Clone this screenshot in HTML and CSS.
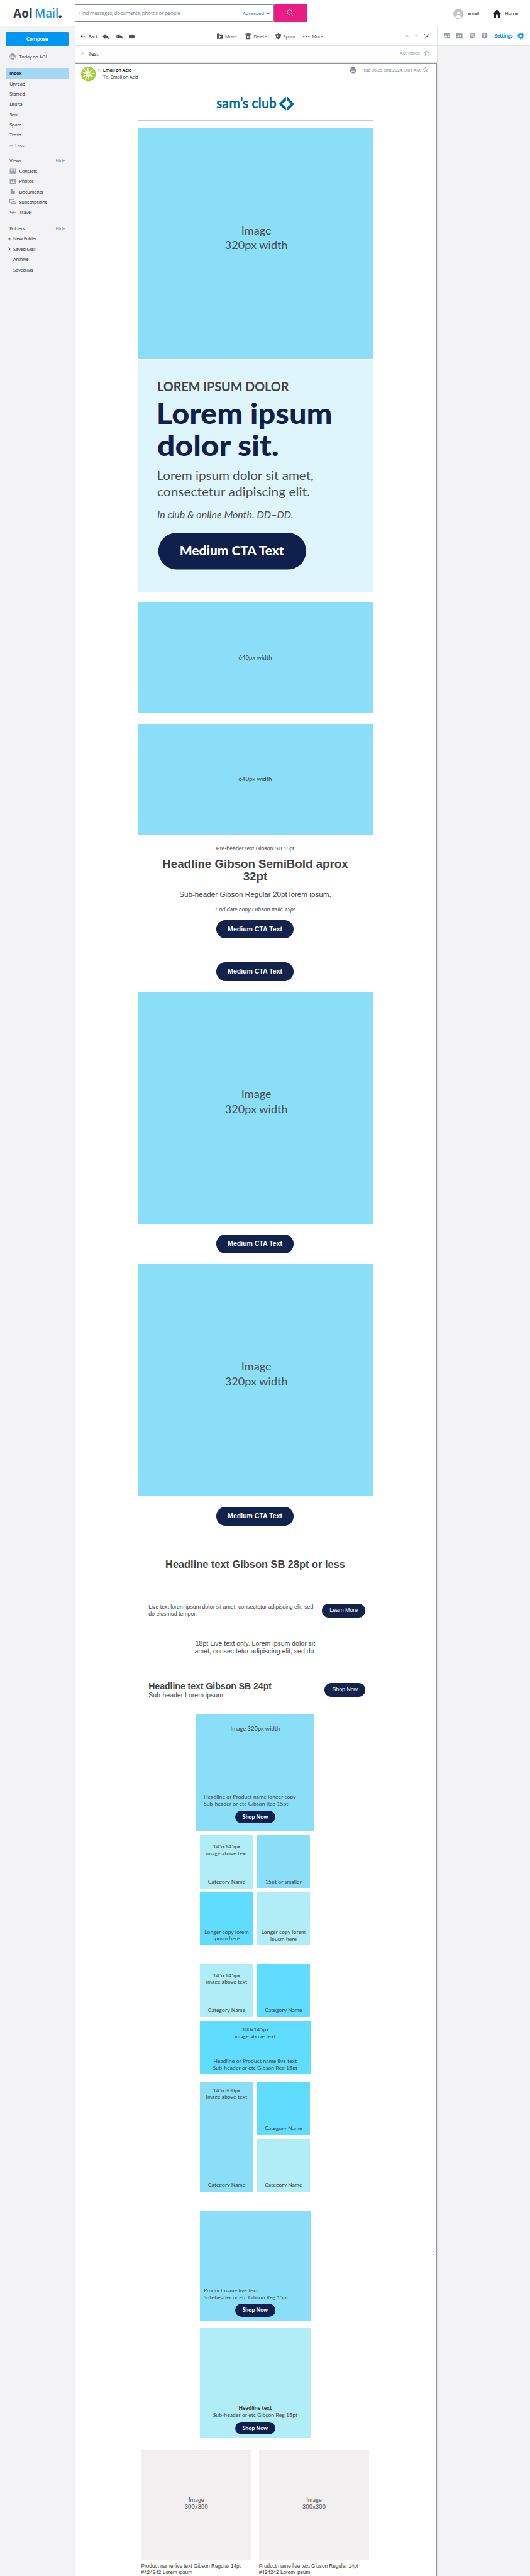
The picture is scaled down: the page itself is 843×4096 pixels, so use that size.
FILE: index.html
```html
<!DOCTYPE html>
<html lang="en">
<head>
<meta charset="utf-8">
<title>Aol Mail - Test</title>
<link rel="stylesheet" href="styles.css">
</head>
<body>
<div class="page">
  <header class="top">
    <svg class="brand" viewBox="0 0 202 72">
      <text x="36" y="48.500" textLength="52" lengthAdjust="spacingAndGlyphs">Aol</text>
      <text class="brand-mail" x="94" y="48.500" textLength="65" lengthAdjust="spacingAndGlyphs">Mail</text>
      <circle cx="163.500" cy="45" r="3.600"/>
    </svg>
    <div class="search">
      <span class="search-hint">Find messages, documents, photos or people</span>
      <span class="search-adv">Advanced</span>
      <svg class="chev" viewBox="0 0 12 8"><path d="M1.5 1.5 6 6 10.500 1.500" fill="none" stroke="#0f69ff" stroke-width="2"/></svg>
    </div>
    <div class="search-btn"><svg viewBox="0 0 20 20"><circle cx="8" cy="7.500" r="6.300"/><path d="M12.300 12.300 19 19"/></svg></div>
    <div class="account">
      <svg class="face" viewBox="0 0 28 28"><circle cx="14" cy="14" r="14" fill="#c5c5c5"/><circle cx="14" cy="11.500" r="3.800" fill="#fff"/><path d="M5.500 23c1-4.500 4.500-6 8.500-6s7.500 1.500 8.500 6c-4.500 4-12.500 4-17 0z" fill="#fff"/></svg>
      <span class="who">email</span>
      <svg class="house" viewBox="0 0 22 23"><path d="M11 0 22 12H20V23H13.500V16.500a2.500 2.500 0 0 0-5 0V23H2V12H0z" fill="#1d2228"/></svg>
      <span>Home</span>
    </div>
  </header>

  <div class="body">
    <aside class="side">
      <div class="compose">Compose</div>
      <div class="today"><span class="today-ico">Aol.</span>Today on AOL</div>
      <ul class="nav">
        <li class="on">Inbox</li><li>Unread</li><li>Starred</li><li>Drafts</li><li>Sent</li><li>Spam</li><li>Trash</li>
        <li class="less"><svg viewBox="0 0 9 6"><path d="M1 5 4.500 1.500 8 5" fill="none" stroke="#5b636a" stroke-width="1.700"/></svg>Less</li>
      </ul>
      <div class="group"><span>Views</span><span class="hide">Hide</span></div>
      <ul class="views">
        <li><svg viewBox="0 0 18 16"><path fill="#979ea8" d="M1 1h16v14H1z"/><circle cx="6.500" cy="6" r="2" fill="#f4f4f7"/><path fill="#f4f4f7" d="M3 12c0-3 7-3 7 0zM11.500 4h4v1.300h-4zM11.500 7h4v1.300h-4zM12.500 10h3v1.300h-3z"/></svg>Contacts</li>
        <li><svg viewBox="0 0 18 16"><path fill="#979ea8" d="M1 1h16v14H1z"/><path fill="#f4f4f7" d="M3 12 6 6.500 8 9.500 11 5l4.500 7z"/></svg>Photos</li>
        <li><svg viewBox="0 0 18 16"><path fill="#979ea8" d="M3 1h7l5 5v9H3z"/><path fill="#f4f4f7" d="M10 1v5h5z"/></svg>Documents</li>
        <li><svg viewBox="0 0 18 16"><path fill="#979ea8" d="M0 1h13v2H2v8H0zM4 5h15v1l-7.500 4L4 6zM4 8l7.500 3.700L19 8v7H4z"/></svg>Subscriptions</li>
        <li><svg viewBox="0 0 18 16"><path fill="#979ea8" d="M1 5h2l2 2h4L6 3h2.500L13 7h3c2 0 2 2 0 2h-3l-4.500 4H6l2-3.700H4C2 9 1 7 1 5z"/></svg>Travel</li>
      </ul>
      <div class="group folders"><span>Folders</span><span class="hide">Hide</span></div>
      <ul class="dirs">
        <li><svg viewBox="0 0 10 10"><path d="M5 .5v9M.5 5h9" stroke="#5b636a" stroke-width="1.500"/></svg>New Folder</li>
        <li><svg viewBox="0 0 10 10"><path d="M3 1l4 4-4 4" fill="none" stroke="#5b636a" stroke-width="1.700"/></svg>Saved Mail</li>
        <li><i></i>Archive</li>
        <li><i></i>SavedIMs</li>
      </ul>
    </aside>

    <main class="main">
      <div class="bar">
        <div class="bar-left">
          <svg class="i-back" viewBox="0 0 14 14"><path d="M13.500 7H1.500M7 1.500 1.500 7 7 12.500" fill="none" stroke="#000" stroke-width="1.800"/></svg>
          <span class="t-back">Back</span>
          <svg class="i-reply" viewBox="0 0 18 15"><path d="M7.500 0v4c6 .5 9.500 4.500 10 11-2.500-4-5.500-5-10-5v4L0 7z"/></svg>
          <svg class="i-all" viewBox="0 0 20 15"><path d="M10 0v4c6 .5 9.500 4.500 10 11-2.500-4-5.500-5-10-5v4L3.500 7zM7 0v2L2.500 7 7 12v2L0 7z"/></svg>
          <svg class="i-fwd" viewBox="0 0 18 14"><path d="M10 0 18 7l-8 7v-3H0V3h10z"/></svg>
        </div>
        <div class="bar-mid">
          <svg viewBox="0 0 16 16"><path d="M0 1h6l2 2h8v12H0z"/><path d="M8 5.500 12 10H9v3.500H7V10H4z" fill="#fff"/></svg><span class="t-move">Move</span>
          <svg viewBox="0 0 16 16"><path d="M5 0h6v1h4.500v2H.5V1H5zM2 4.500h12V16H2z"/><path d="M6 7v6.500M10 7v6.500" stroke="#fff" stroke-width="1.500"/></svg><span class="t-del">Delete</span>
          <svg viewBox="0 0 16 17"><path d="M8 0c2.500 2 5 2.500 8 2.500 0 7-2 12-8 14.500C2 14.500 0 9.500 0 2.500 3 2.500 5.500 2 8 0z"/><path d="m5.500 5.500 5 5.500m0-5.500-5 5.500" stroke="#fff" stroke-width="1.800"/></svg><span class="t-spam">Spam</span>
          <svg class="dots" viewBox="0 0 18 4"><circle cx="2" cy="2" r="2"/><circle cx="9" cy="2" r="2"/><circle cx="16" cy="2" r="2"/></svg><span>More</span>
        </div>
        <div class="bar-right">
          <svg class="tri" viewBox="0 0 11 6"><path d="M0 6h11L5.500 0z"/></svg>
          <svg class="tri" viewBox="0 0 11 6"><path d="M0 0h11L5.500 6z"/></svg>
          <svg class="x" viewBox="0 0 13 13"><path d="m.5.5 12 12m0-12-12 12" stroke="#000" stroke-width="1.500"/></svg>
        </div>
      </div>
      <div class="subject">
        <span class="dot"></span><span class="title">Test</span>
        <span class="where">Aol/Inbox</span>
        <svg class="star" viewBox="0 0 16 16"><path d="m8 1.500 2 4.600 4.800.4-3.700 3.200 1.200 4.800L8 11.900l-4.300 2.600 1.200-4.800L1.200 6.500 6 6.100z"/></svg>
      </div>

      <article class="message">
        <div class="from">
          <svg class="avatar" viewBox="0 0 40 40"><circle cx="20" cy="20" r="20" fill="#a3cf34"/><path d="M20 20 18 4M20 20 29 9M20 20l16-2M20 20l12 8M20 20l1 15M20 20l-9 14M20 20 6 27M20 20 6 16M20 20 9 8" stroke="#fff" stroke-linecap="round" stroke-width="2.400"/><circle cx="20" cy="20" r="7" fill="#fff"/><path d="m15 22 4-4 5 1 1-3-2 7z" fill="none" stroke="#a3cf34"/></svg>
          <span class="dot"></span>
          <div class="names"><b>Email on Acid</b><div><em>To:</em> Email on Acid</div></div>
          <svg class="printer" viewBox="0 0 16 16"><path d="M3 0h10v4H3zM0 5.500h16V13h-2.500V10h-11v3H0zM4 11.500h8V16H4z"/></svg>
          <span class="date">Tue 06 25 amt 2024, 3:01 AM</span>
          <svg class="star" viewBox="0 0 16 16"><path d="m8 1.500 2 4.600 4.800.4-3.700 3.200 1.200 4.800L8 11.900l-4.300 2.600 1.200-4.800L1.200 6.500 6 6.100z"/></svg>
        </div>
        <svg class="handle" viewBox="0 0 8 12"><path d="M2 1.500 6 6l-4 4.500" fill="none" stroke="#979ea8" stroke-width="1.500"/></svg>

        <div class="mail">
          <svg class="logo" viewBox="0 0 212 35">
            <text x="0" y="29" textLength="164" lengthAdjust="spacingAndGlyphs">sam’s club</text>
            <path d="M189.500 0v8l-11 9.500 11 9.500v8l-2.500-.5-17-17L187 .5z"/><path d="M192.500 0v8l11 9.500-11 9.500v8l2.500-.5 17-17L195 .5z"/>
          </svg>
          <hr class="rule">
          <div class="pic first">Image<br>320px width</div>
          <svg class="hero" viewBox="0 0 640 629.600">
            <text class="hero-eyebrow" x="53" y="86" textLength="358" lengthAdjust="spacingAndGlyphs">LOREM IPSUM DOLOR</text>
            <text class="hero-title" x="51" y="174" textLength="478" lengthAdjust="spacingAndGlyphs">Lorem ipsum</text>
            <text class="hero-title" x="53" y="262" textLength="331" lengthAdjust="spacingAndGlyphs">dolor sit.</text>
            <text class="hero-text" x="52" y="326" textLength="426" lengthAdjust="spacingAndGlyphs">Lorem ipsum dolor sit amet,</text>
            <text class="hero-text" x="53" y="370" textLength="415" lengthAdjust="spacingAndGlyphs">consectetur adipiscing elit.</text>
            <text class="hero-date" x="53" y="430" textLength="370" lengthAdjust="spacingAndGlyphs">In club &amp; online Month. DD–DD.</text>
            <rect x="56" y="470" width="402" height="100" rx="50" fill="#10204c"/>
            <text class="hero-btn" x="114" y="532" textLength="284" lengthAdjust="spacingAndGlyphs">Medium CTA Text</text>
          </svg>
          <div class="half">640px width</div>
          <div class="half">640px width</div>

          <div class="pre">Pre-header text Gibson SB 15pt</div>
          <h1>Headline Gibson SemiBold aprox<br>32pt</h1>
          <div class="sub">Sub-header Gibson Regular 20pt lorem ipsum.</div>
          <div class="end">End date copy GIbson Italic 15pt</div>
          <div class="cta">Medium CTA Text</div>
          <div class="cta alone">Medium CTA Text</div>
          <div class="pic">Image<br>320px width</div>
          <div class="cta after">Medium CTA Text</div>
          <div class="pic">Image<br>320px width</div>
          <div class="cta after">Medium CTA Text</div>

          <h2>Headline text Gibson SB 28pt or less</h2>
          <div class="row live">
            <p>Live text lorem ipsum dolor sit amet, consectetur adipiscing elit, sed<br>do eiusmod tempor.</p>
            <div class="mini learn">Learn More</div>
          </div>
          <p class="only">18pt Live text only. Lorem ipsum dolor sit<br>amet, consec tetur adipiscing elit, sed do.</p>
          <div class="row shop">
            <div><h3>Headline text Gibson SB 24pt</h3><p>Sub-header Lorem ipsum</p></div>
            <div class="mini">Shop Now</div>
          </div>

          <div class="card">
            <div class="card-top">Image 320px width</div>
            <div class="card-copy">Headline or Product name longer copy<br>Sub-header or etc Gibson Reg 15pt</div>
            <div class="pill">Shop Now</div>
          </div>

          <div class="tiles">
            <div class="tile pale tall1"><span>145x145px<br>image above text</span><span>Category Name</span></div>
            <div class="tile blue"><span>15pt or smaller</span></div>
            <div class="tile cyan"><span>Longer copy lorem<br>ipusm here</span></div>
            <div class="tile pale low"><span>Longer copy lorem<br>ipusm here</span></div>
          </div>
          <div class="tiles second">
            <div class="tile pale tall1"><span>145x145px<br>image above text</span><span>Category Name</span></div>
            <div class="tile cyan"><span>Category Name</span></div>
            <div class="tile cyan wide"><span>300x145px<br>image above text</span><span>Headline or Product name live text<br>Sub-header or etc Gibson Reg 15pt</span></div>
          </div>
          <div class="tiles third">
            <div class="tile blue long"><span>145x300px<br>image above text</span><span>Category Name</span></div>
            <div class="tile cyan"><span>Category Name</span></div>
            <div class="tile pale"><span>Category Name</span></div>
          </div>

          <div class="promo blue">
            <div class="promo-copy left">Product name live text<br>Sub-header or etc Gibson Reg 15pt</div>
            <div class="pill">Shop Now</div>
          </div>
          <div class="promo pale next">
            <div class="promo-copy"><b>Headline text</b><br>Sub-header or etc Gibson Reg 15pt</div>
            <div class="pill">Shop Now</div>
          </div>

          <div class="products">
            <div><div class="thumb">Image<br>300x300</div><p>Product name live text Gibson Regular 14pt<br>#424242 Lorem ipsum</p></div>
            <div><div class="thumb">Image<br>300x300</div><p>Product name live text Gibson Regular 14pt<br>#424242 Lorem ipsum</p></div>
          </div>
        </div>
      </article>
    </main>

    <aside class="tools">
      <div class="tools-bar">
        <svg class="g1" viewBox="0 0 16 14"><path fill="#979ea8" d="M0 0h16v14H0z"/><circle cx="5.500" cy="5" r="2" fill="#fff"/><path fill="#fff" d="M2 11c0-3 7-3 7 0zM10.500 3h4v1.300h-4zM10.500 6h4v1.300h-4zM11.500 9h3v1.300h-3z"/></svg>
        <svg class="g2" viewBox="0 0 18 16"><path fill="#979ea8" d="M0 2h3V0h2v2h8V0h2v2h3v14H0z"/><text x="9" y="12.600" text-anchor="middle" class="cal">24</text></svg>
        <svg class="g3" viewBox="0 0 15 16"><path fill="#979ea8" d="M0 0h14v10H9v6H0zM10.500 11.500H14L10.500 16z"/><path stroke="#fff" stroke-width="1.300" d="M2.500 4h9M2.500 7h9M2.500 10h5"/></svg>
        <svg class="g4" viewBox="0 0 16 16"><circle cx="8" cy="8" r="8" fill="#979ea8"/><text x="8" y="12.300" text-anchor="middle" class="q">?</text></svg>
        <b>Settings</b>
        <svg class="g5" viewBox="0 0 18 18"><circle cx="9" cy="9" r="5" fill="none" stroke="#0f94f3" stroke-width="3.600"/><path d="M9 0v4M9 14v4M0 9h4M14 9h4M2.600 2.600l2.900 2.900M12.500 12.500l2.900 2.900M2.600 15.400l2.900-2.900M12.500 5.500l2.900-2.900" stroke="#0f94f3" stroke-width="3.200"/></svg>
      </div>
    </aside>
  </div>
</div>
</body>
</html>
```
FILE: styles.css
```css
/* 1rem = 10 layout units */
html { font-size: 5.852px; }
* { box-sizing: border-box; }
body { margin: 0; background: #fff; }
ul { list-style: none; margin: 0; padding: 0; }
p, h1, h2, h3 { margin: 0; }
svg { display: block; flex: none; overflow: visible; }

.page { width: 100%; height: 100vh; overflow: hidden; font: 1.26rem/2.8rem "Open Sans", "Noto Sans", sans-serif; letter-spacing: -.02em; color: #232a31; display: flex; flex-direction: column; white-space: nowrap; }

/* header */
.top { height: 7.2rem; flex: none; border-bottom: 1px solid #e0e4e9; display: flex; }
.brand { width: 20.25rem; height: 7.2rem; font: 700 33px "Open Sans", sans-serif; letter-spacing: 0; fill: #3c3c3c; }
.brand-mail { fill: #2a8fe2; font-weight: 600; }
.search { width: 54.2rem; height: 4.8rem; margin-top: 1.2rem; border: 1px solid #828a93; border-radius: .2rem 0 0 .2rem; display: flex; align-items: center; padding-left: 1.1rem; }
.search-hint { font-size: 1.4rem; color: #828a93; width: 44.4rem; letter-spacing: -.035em; }
.search-adv { font-size: 1.35rem; color: #0f69ff; width: 6.3rem; letter-spacing: -.03em; }
.chev { width: 1.2rem; height: .8rem; }
.search-btn { width: 9.1rem; height: 4.8rem; margin-top: 1.2rem; background: #e81c82; border-radius: .2rem; display: flex; align-items: center; justify-content: center; }
.search-btn svg { width: 2rem; height: 2rem; fill: none; stroke: #fff; stroke-width: 1.5; }
.account { margin-left: 39.7rem; height: 7.2rem; display: flex; align-items: center; font-size: 1.35rem; font-weight: 500; letter-spacing: -.04em; color: #1d2228; }
.face { width: 2.8rem; height: 2.8rem; margin-top: .4rem; }
.who { margin-left: 1rem; width: 7rem; }
.house { width: 2.2rem; height: 2.3rem; margin-top: .3rem; margin-right: 1rem; }

.body { flex: 1; display: flex; min-height: 0; }

/* sidebar */
.side { width: 20.3rem; flex: none; background: #f3f3f6; padding: 1.6rem 1.75rem 0 1.6rem; }
.compose { height: 3.6rem; border-radius: .2rem; background: #0096f2; color: #fff; font: 700 1.4rem/3.6rem "Open Sans", sans-serif; letter-spacing: -.05em; text-align: center; }
.today { height: 5.3rem; padding: 1.6rem 0 0 .9rem; border-bottom: 1px solid #d5d8dd; display: flex; }
.today-ico { width: 1.8rem; height: 1.8rem; margin: .5rem .9rem 0 0; border-radius: 50%; background: #979ea8; color: #fff; font: 700 .85rem/1.8rem "Open Sans", sans-serif; text-align: center; }
.nav { padding-top: .8rem; }
.nav li { height: 2.8rem; padding-left: 1rem; }
.nav .on { background: #a5d6f6; border-left: .25rem solid #0f8fe8; padding-left: .8rem; font-weight: 700; letter-spacing: -.04em; }
.nav .less { display: flex; align-items: center; gap: .6rem; color: #5b636a; }
.less svg { width: .9rem; height: .6rem; }
.group { display: flex; justify-content: space-between; padding: 0 .8rem 0 1rem; margin-top: 1.4rem; }
.folders { margin-top: 1.6rem; }
.hide { color: #6e7780; }
.views li { height: 2.8rem; display: flex; align-items: center; padding-left: .9rem; gap: .9rem; }
.views svg { width: 1.8rem; height: 1.6rem; }
.dirs li { height: 2.8rem; display: flex; align-items: center; padding-left: .5rem; gap: .5rem; }
.dirs svg, .dirs i { width: 1rem; height: 1rem; }

/* reading pane */
.main { width: 98.4rem; flex: none; display: flex; flex-direction: column; }
.bar { height: 5.2rem; flex: none; border-bottom: 1px solid #e0e4e9; display: flex; align-items: center; color: #4d5359; }
.bar svg { fill: #4d4f52; }
.bar-left { width: 38.7rem; padding-left: 1.6rem; padding-top: .4rem; display: flex; align-items: center; color: #232a31; }
.i-back { width: 1.3rem; height: 1.3rem; }
.t-back { width: 4.7rem; padding-left: .8rem; }
.i-reply { width: 1.8rem; height: 1.5rem; }
.i-all { width: 2rem; height: 1.5rem; margin-left: 1.7rem; }
.i-fwd { width: 1.8rem; height: 1.4rem; margin-left: 1.7rem; }
.bar-mid { width: 51.1rem; padding-top: .4rem; display: flex; align-items: center; }
.bar-mid svg { width: 1.6rem; height: 1.6rem; margin-right: .6rem; }
.t-move { width: 5.5rem; }
.t-del { width: 5.9rem; }
.t-spam { width: 5.4rem; }
.bar-mid .dots { width: 1.8rem; height: .4rem; margin-right: .6rem; }
.bar-right { display: flex; align-items: center; gap: 1.35rem; }
.bar-right .tri { width: 1.1rem; height: .6rem; fill: #b9bdc2; margin-bottom: .2rem; }
.bar-right .x { width: 1.3rem; height: 1.3rem; margin: .4rem 0 0 .4rem; }
.subject { height: 4.7rem; flex: none; display: flex; align-items: center; padding-left: 1.8rem; }
.dot { width: .8rem; height: .8rem; border-radius: 50%; background: #e0e4e9; flex: none; }
.title { margin-left: 1.1rem; width: 84.7rem; font-size: 1.5rem; letter-spacing: -.04em; }
.subject .dot { margin-bottom: .3rem; }
.where { width: 6.4rem; color: #979ea8; margin-bottom: .6rem; }
.star { width: 1.6rem; height: 1.6rem; fill: none; stroke: #7d858e; stroke-width: 1.2; }
.subject .star { margin-bottom: .6rem; }
.message { position: relative; flex: 1; min-height: 0; border: 1px solid #8f959c; border-bottom: 0; box-shadow: 0 -1px 1px #dfe2e6; }
.from { height: 4.9rem; padding: .8rem 0 0 1.5rem; display: flex; }
.avatar { width: 4rem; height: 4rem; }
.from .dot { margin: .6rem .6rem 0 .6rem; }
.names { width: 67.3rem; line-height: 1.8rem; padding-top: .1rem; }
.names b { letter-spacing: -.04em; }
.names em { font-style: normal; font-weight: 700; color: #979ea8; }
.printer { width: 1.6rem; height: 1.6rem; fill: #7d8188; margin-top: .2rem; }
.date { width: 16.2rem; margin-left: 1.8rem; line-height: 1.8rem; padding-top: .1rem; color: #828a93; letter-spacing: -.04em; }
/* rail toggle sitting on the pane's right edge */
.handle { position: absolute; right: .2rem; top: 594.3rem; width: .8rem; height: 1.2rem; }

/* e-mail */
.mail { width: 64rem; margin-left: 16.9rem; font-family: "Liberation Sans", Arial, sans-serif; letter-spacing: 0; color: #424242; }
.logo { width: 21.2rem; height: 3.5rem; margin: 4.4rem 0 2.55rem 21.4rem; font: 700 39px Lato, sans-serif; fill: #0067a0; }
.rule { border: 0; height: 1px; background: #c8c8c8; margin: 0 0 2rem; }
.pic { height: 63rem; background: #8adef8; padding-top: 25.8rem; font: 3.1rem/4rem Lato, sans-serif; text-align: center; padding-left: .6rem; color: #4a4f53; }
.pic.first { height: 62.8rem; margin-bottom: .2rem; }
.hero { width: 64rem; height: 62.96rem; background: #dff5fc; font-family: Lato, sans-serif; fill: #4c4f52; }
.hero-eyebrow { font-size: 35px; font-weight: 700; fill: #444; }
.hero-title { font-size: 77px; font-weight: 900; fill: #10204c; }
.hero-text { font-size: 34px; }
.hero-date { font-size: 27px; font-style: italic; }
.hero-btn { font-size: 35px; font-weight: 900; fill: #fff; }
.half { height: 30rem; margin-top: 3rem; background: #8adef8; padding-top: 14.02rem; font: 1.65rem/2rem Lato, sans-serif; text-align: center; }
.pre { margin-top: 2.98rem; font-size: 1.5rem; line-height: 1.8rem; text-align: center; }
h1 { margin-top: 1.51rem; font-size: 3.2rem; line-height: 3.4rem; text-align: center; }
.sub { margin-top: 2.02rem; font-size: 2rem; line-height: 2.4rem; text-align: center; }
.end { margin-top: 1.97rem; font-size: 1.5rem; line-height: 1.8rem; font-style: italic; text-align: center; }
.cta { width: 21.1rem; height: 5rem; margin: 2.02rem 0 0 21.4rem; border-radius: 2.5rem; background: #12224a; color: #fff; font-size: 1.8rem; line-height: 5rem; font-weight: 700; text-align: center; }
.cta.alone { margin-top: 6.5rem; margin-bottom: 3rem; }
.cta.after { margin-top: 3rem; margin-bottom: 3rem; }
h2 { margin-top: 8.99rem; font-size: 2.8rem; line-height: 3.2rem; text-align: center; }
.row { display: flex; justify-content: space-between; align-items: flex-start; padding: 0 2rem 0 3rem; }
.live { height: 3.7rem; margin-top: 9.11rem; font-size: 1.5rem; line-height: 1.8rem; }
.mini { width: 11.2rem; height: 3.7rem; border-radius: 1.85rem; background: #12224a; color: #fff; font-size: 1.5rem; line-height: 3.7rem; text-align: center; }
.learn { width: 11.9rem; }
.only { margin-top: 5.98rem; font-size: 1.8rem; line-height: 2.1rem; text-align: center; }
.shop { height: 4.71rem; margin-top: 7.19rem; }
.shop h3 { font-size: 2.4rem; line-height: 2.4rem; margin-bottom: .21rem; }
.shop p { font-size: 1.8rem; line-height: 2.1rem; }
.shop .mini { margin-top: .43rem; }

.blue { background: #8adef8; }
.cyan { background: #60ddfe; }
.pale { background: #b0edf6; }
.card { width: 32rem; height: 32rem; margin: 4.02rem auto 0; background: #8adef8; padding-top: 3.13rem; font-family: Lato, sans-serif; }
.card-top { font-size: 1.6rem; line-height: 2rem; text-align: center; }
.card-copy { margin-top: 16.67rem; padding-left: 2rem; font-size: 1.45rem; line-height: 1.85rem; letter-spacing: .015em; }
.pill { width: 10.9rem; height: 3.5rem; margin: .8rem auto 0; border-radius: 1.75rem; background: #10204c; color: #fff; font: 900 1.5rem/3.4rem Lato, sans-serif; letter-spacing: 0; text-align: center; }
.tiles { display: grid; grid-template-columns: 14.5rem 14.4rem; column-gap: 1rem; width: 30rem; margin: 1rem 0 0 17rem; grid-template-rows: 15.5rem 14.5rem; align-items: start; font: 1.45rem/1.8rem Lato, sans-serif; letter-spacing: .015em; text-align: center; }
.tile { height: 14.4rem; display: flex; flex-direction: column; justify-content: flex-end; padding-bottom: .84rem; }
.tile.tall1 { height: 14.5rem; justify-content: space-between; padding: 2.26rem 0 .94rem; }
.tile.low { height: 14.5rem; }
.second { margin-top: 5rem; }
.tile.wide { grid-column: 1 / 3; width: 30rem; justify-content: space-between; padding: 1.56rem 0 .74rem; }
.third { margin-top: 2rem; grid-template-rows: 15.5rem 14.4rem; }
.tile.long { grid-row: 1 / 3; height: 29.9rem; justify-content: space-between; padding-top: 1.56rem; }
.promo { width: 30rem; height: 30rem; margin: 5.1rem 0 0 17rem; padding-top: 20.93rem; font: 1.45rem/1.85rem Lato, sans-serif; letter-spacing: .015em; text-align: center; }
.promo.next { margin-top: 2rem; }
.promo-copy b { font-weight: 900; }
.left { text-align: left; padding-left: 1rem; }
.promo .pill { margin-top: .77rem; }
.products { display: flex; gap: 2rem; margin: 3rem 0 0 1rem; font-size: 1.4rem; line-height: 1.6rem; }
.products > div { width: 30rem; }
.thumb { height: 29.9rem; background: #f1eff0; padding-top: 12.88rem; margin-bottom: 1.12rem; font: 1.55rem/1.85rem Lato, sans-serif; letter-spacing: .02em; text-align: center; color: #555; }

/* right rail */
.tools { flex: 1; background: #f3f3f6; border-left: 1px solid #e0e4e9; }
.tools-bar { height: 5.2rem; background: #fff; border-bottom: 1px solid #e0e4e9; display: flex; align-items: center; padding-left: 1.8rem; font-size: 1.35rem; color: #0f94f3; }
.tools-bar b { width: 6.1rem; letter-spacing: -.06em; }
.g1 { width: 1.6rem; height: 1.4rem; margin-right: 1.7rem; }
.g2 { width: 1.8rem; height: 1.6rem; margin-right: 1.8rem; }
.g3 { width: 1.5rem; height: 1.6rem; margin-right: 1.8rem; }
.g4 { width: 1.6rem; height: 1.6rem; margin-right: 2rem; }
.g5 { width: 1.8rem; height: 1.8rem; }
.cal { font: 700 9px "Open Sans", sans-serif; fill: #fff; letter-spacing: 0; }
.q { font: 700 12px "Open Sans", sans-serif; fill: #fff; }
```
